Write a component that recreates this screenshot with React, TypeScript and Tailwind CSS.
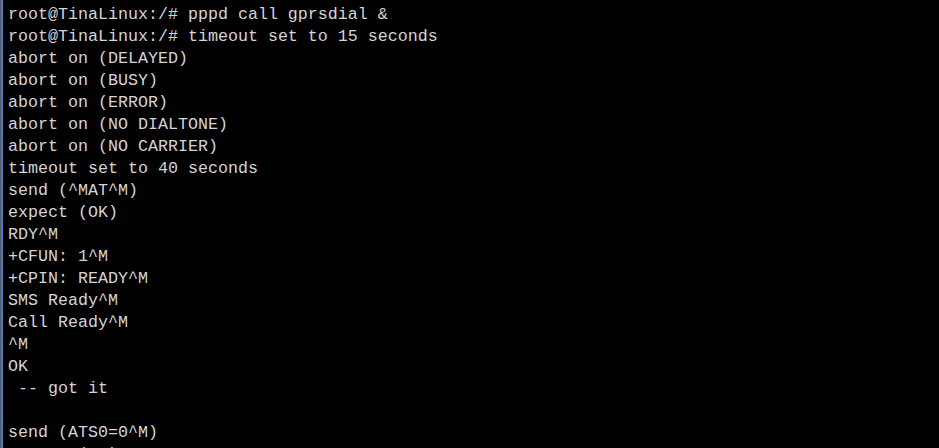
const lines = [
  "root@TinaLinux:/# pppd call gprsdial &",
  "root@TinaLinux:/# timeout set to 15 seconds",
  "abort on (DELAYED)",
  "abort on (BUSY)",
  "abort on (ERROR)",
  "abort on (NO DIALTONE)",
  "abort on (NO CARRIER)",
  "timeout set to 40 seconds",
  "send (^MAT^M)",
  "expect (OK)",
  "RDY^M",
  "+CFUN: 1^M",
  "+CPIN: READY^M",
  "SMS Ready^M",
  "Call Ready^M",
  "^M",
  "OK",
  " -- got it",
  "",
  "send (ATS0=0^M)",
  "expect (OK)",
];

export default function App() {
  return (
    <div className="flex h-[448px] w-[939px] overflow-hidden bg-black">
      <div className="w-px shrink-0 bg-[#5a5a5a]" />
      <div className="w-[2px] shrink-0 bg-[#3a7fd6]" />
      <pre
        className="m-0 pl-[5px] pt-[4px] text-[16.67px] leading-[22px] text-[#d4d4d4] whitespace-pre"
        style={{ fontFamily: '"Liberation Mono", "DejaVu Sans Mono", monospace' }}
      >
        {lines.map((l, i) => (
          <div key={i} className="h-[22px]">{l}</div>
        ))}
      </pre>
    </div>
  );
}
